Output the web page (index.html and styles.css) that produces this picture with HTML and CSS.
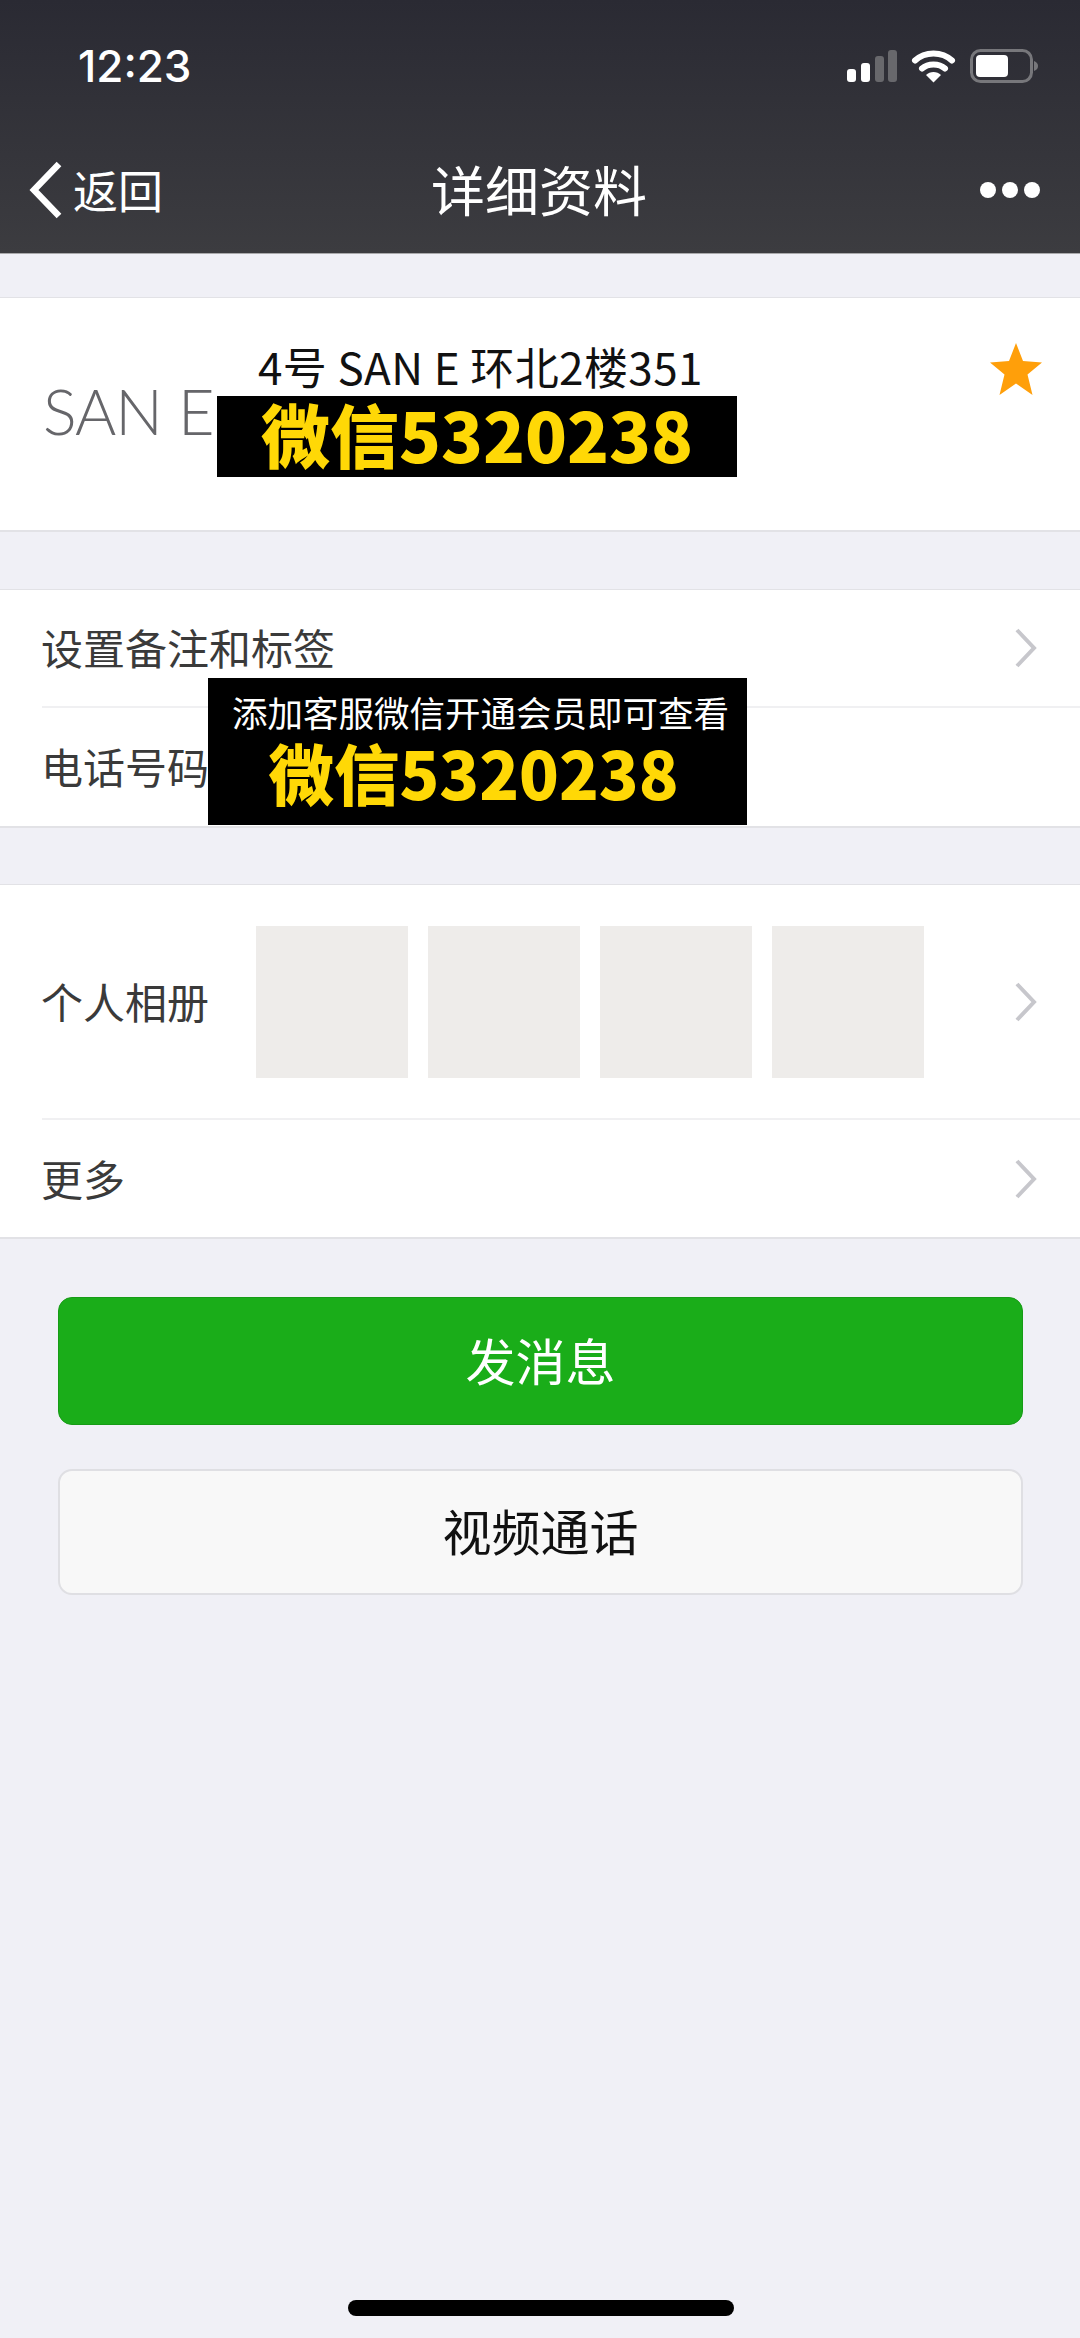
FILE: index.html
```html
<!DOCTYPE html>
<html lang="zh">
<head>
<meta charset="utf-8">
<title>详细资料</title>
<link rel="stylesheet" href="styles.css">
</head>
<body>
<div class="page">

  <header class="topbar">
    <div class="status">
      <span class="time">12:23</span>
      <svg class="status-icons" width="192" height="34" viewBox="0 0 192 34">
        <rect x="0" y="20" width="9" height="13" rx="3" fill="#fff"/>
        <rect x="14" y="14" width="9" height="19" rx="3" fill="#fff"/>
        <rect x="28" y="7" width="9" height="26" rx="3" fill="#68686c"/>
        <rect x="41" y="1" width="9" height="32" rx="3" fill="#68686c"/>
        <path d="M68 11.500 C78 2 95 2 105 11.500" fill="none" stroke="#fff" stroke-width="6" stroke-linecap="round"/>
        <path d="M75 19.500 C81 14 92 14 98 19.500" fill="none" stroke="#fff" stroke-width="6" stroke-linecap="round"/>
        <path d="M79 26 C83 22 90 22 94 26 L86.500 33.500 Z" fill="#fff"/>
        <rect x="124.500" y="1.500" width="60" height="31" rx="9" fill="none" stroke="#77777b" stroke-width="3"/>
        <rect x="129" y="6" width="32" height="22" rx="4" fill="#fff"/>
        <path d="M187 12 C190 13 191 15 191 17 C191 19 190 21 187 22 Z" fill="#77777b"/>
      </svg>
    </div>
    <nav class="nav">
      <div class="back">
        <svg width="36" height="58" viewBox="0 0 36 58"><path d="M32 3 L7 29 L32 55" fill="none" stroke="#fff" stroke-width="6.500"/></svg>
        <span>返回</span>
      </div>
      <div class="nav-title">详细资料</div>
      <div class="dots"><i></i><i></i><i></i></div>
    </nav>
  </header>

  <section class="card profile">
    <div class="logo">SAN E</div>
    <div class="name">4号 SAN E 环北2楼351</div>
    <svg class="star" width="52" height="52" viewBox="0 0 52 52"><path d="M26 0 L33 18 L52 19.500 L37.500 31.500 L42.500 52 L26 40.500 L9.500 52 L14.500 31.500 L0 19.500 L19 18 Z" fill="#ff9f0a"/></svg>
    <div class="promo promo-name">微信5320238</div>
  </section>

  <section class="card remark">
    <div class="row row-a">
      <span class="label">设置备注和标签</span>
      <svg class="chev" width="24" height="40" viewBox="0 0 24 40"><path d="M3 2 L20 20 L3 38" fill="none" stroke="#c7c7cc" stroke-width="4"/></svg>
    </div>
    <div class="row row-b">
      <span class="label">电话号码</span>
    </div>
    <div class="promo promo-phone">
      <div class="promo-note">添加客服微信开通会员即可查看</div>
      <div>微信5320238</div>
    </div>
  </section>

  <section class="card album">
    <div class="row row-photos">
      <span class="label">个人相册</span>
      <div class="photos"><i></i><i></i><i></i><i></i></div>
      <svg class="chev" width="24" height="40" viewBox="0 0 24 40"><path d="M3 2 L20 20 L3 38" fill="none" stroke="#c7c7cc" stroke-width="4"/></svg>
    </div>
    <div class="row row-more">
      <span class="label">更多</span>
      <svg class="chev" width="24" height="40" viewBox="0 0 24 40"><path d="M3 2 L20 20 L3 38" fill="none" stroke="#c7c7cc" stroke-width="4"/></svg>
    </div>
  </section>

  <div class="actions">
    <button class="btn btn-green">发消息</button>
    <button class="btn btn-plain">视频通话</button>
  </div>

  <div class="home-bar"></div>
</div>
</body>
</html>
```

FILE: styles.css
```css
* {
  box-sizing: border-box;
}

body {
  margin: 0;
  background: #f0f0f6;
  font-family: "Noto Sans CJK SC", "Noto Sans", sans-serif;
}

.page {
  width: 1080px;
  height: 2338px;
  display: flex;
  flex-direction: column;
}

/* top bar */
.topbar {
  height: 254px;
  background: linear-gradient(#2a2a33, #3c3c40);
  border-bottom: 1px solid #a9a9ab;
  color: #fff;
}

.status {
  height: 116px;
  padding: 48px 41px 0 78px;
  display: flex;
  justify-content: space-between;
}

.time {
  font-family: Inter, Roboto, sans-serif;
  font-size: 44px;
  font-weight: 500;
  line-height: 36px;
}

.status-icons {
  margin-top: 1px;
}

.nav {
  height: 137px;
  padding: 10px 40px 0 27px;
  display: flex;
  align-items: center;
  justify-content: space-between;
  position: relative;
}

.back {
  display: flex;
  align-items: center;
  gap: 10px;
  font-size: 45px;
  line-height: 60px;
}

.nav-title {
  position: absolute;
  left: 0;
  right: 2px;
  margin-top: -2px;
  text-align: center;
  font-size: 54px;
  line-height: 70px;
}

.dots {
  display: flex;
  gap: 6px;
}

.dots i {
  width: 16px;
  height: 16px;
  border-radius: 50%;
  background: #fff;
}

/* cards */
.card {
  background: #fff;
  border-top: 1px solid #e2e2e6;
  border-bottom: 2px solid #e2e2e6;
  position: relative;
}

.profile {
  margin-top: 43px;
  height: 235px;
  padding-left: 43px;
  display: flex;
}

.logo {
  width: 215px;
  margin-top: 80px;
  font-family: Lato, sans-serif;
  font-size: 63px;
  font-weight: 300;
  line-height: 66px;
  color: #66666a;
  letter-spacing: -1px;
}

.name {
  margin-top: 45px;
  font-size: 44px;
  line-height: 46px;
  letter-spacing: 0.4px;
  color: #111;
}

.star {
  margin: 45px 38px 0 auto;
}

.remark {
  margin-top: 57px;
  height: 239px;
}

.album {
  margin-top: 56px;
  height: 355px;
}

.row {
  display: flex;
  align-items: center;
  justify-content: space-between;
  margin-left: 42px;
  padding-right: 42px;
}

.row-a {
  height: 118px;
  border-bottom: 2px solid #f0f0f2;
}

.row-b {
  height: 118px;
}

.row-photos {
  height: 235px;
  border-bottom: 2px solid #f0f0f2;
}

.row-more {
  height: 117px;
}

.label {
  margin: 0 0 2px -1px;
  font-size: 42px;
  line-height: 56px;
  color: #3a3a3a;
}

.chev {
  display: block;
}

.photos {
  display: flex;
  gap: 20px;
  margin-left: 47px;
  margin-right: auto;
}

.photos i {
  width: 152px;
  height: 152px;
  background: #eeecea;
}

/* black promo banners sit over the card */
.promo {
  position: absolute;
  background: #000;
  color: #ffd806;
  font-weight: 900;
  text-align: center;
}

.promo-name {
  left: 217px;
  top: 98px;
  width: 520px;
  height: 81px;
  font-size: 69px;
  line-height: 74px;
}

.promo-phone {
  left: 208px;
  top: 88px;
  width: 539px;
  height: 147px;
  padding-top: 13px;
  padding-right: 8px;
  font-size: 65.500px;
  line-height: 78px;
}

.promo-note {
  margin: 0 -8px 0 6px;
  font-size: 35.500px;
  font-weight: 400;
  line-height: 42px;
  color: #fff;
}

/* buttons */
.actions {
  margin-top: 58px;
  padding: 0 57px 0 58px;
  display: flex;
  flex-direction: column;
  gap: 44px;
}

.btn {
  display: block;
  width: 100%;
  font-family: inherit;
  border-radius: 14px;
}

.btn-green {
  height: 128px;
  padding: 0 0 4px;
  background: #1aad19;
  border: 1px solid #179b16;
  color: #fff;
  font-size: 50px;
}

.btn-plain {
  height: 126px;
  padding: 0 0 5px;
  background: #f8f8f8;
  border: 2px solid #dfdfe3;
  color: #111;
  font-size: 49px;
}

.home-bar {
  width: 386px;
  height: 16px;
  margin: auto auto 22px 348px;
  border-radius: 8px;
  background: #000;
}
```
